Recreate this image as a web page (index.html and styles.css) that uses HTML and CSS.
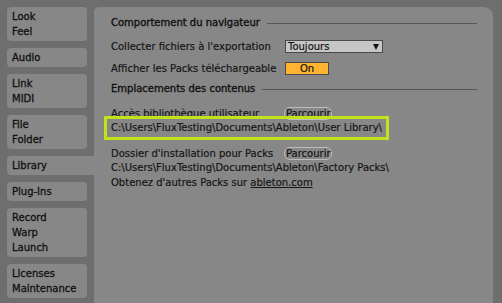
FILE: index.html
```html
<!DOCTYPE html>
<html lang="fr">
<head>
    <meta charset="UTF-8">
    <meta name="viewport" content="width=device-width, initial-scale=1.0">
    <title>Préférences - Library</title>
    <link rel="stylesheet" href="styles.css">
</head>
<body>
    <div class="prefs">
        <nav class="tabs">
            <div class="tab">Look<br>Feel</div>
            <div class="tab">Audio</div>
            <div class="tab">Link<br>MIDI</div>
            <div class="tab">File<br>Folder</div>
            <div class="tab active">Library</div>
            <div class="tab">Plug-Ins</div>
            <div class="tab">Record<br>Warp<br>Launch</div>
            <div class="tab">Licenses<br>Maintenance</div>
        </nav>

        <main class="panel">
            <div class="section-title">Comportement du navigateur</div>

            <div class="row row-first">
                <span class="label">Collecter fichiers à l'exportation</span>
                <div class="select">
                    <span>Toujours</span>
                    <span class="arrow"></span>
                </div>
            </div>

            <div class="row row-toggle">
                <span class="label">Afficher les Packs téléchargeable</span>
                <div class="toggle">On</div>
            </div>

            <div class="section-title section-second">Emplacements des contenus</div>

            <div class="row row-user">
                <span class="label">Accès bibliothèque utilisateur</span>
                <div class="browse">Parcourir</div>
            </div>
            <div class="path highlight">C:\Users\FluxTesting\Documents\Ableton\User Library\</div>

            <div class="row row-packs">
                <span class="label">Dossier d'installation pour Packs</span>
                <div class="browse">Parcourir</div>
            </div>
            <div class="path">C:\Users\FluxTesting\Documents\Ableton\Factory Packs\</div>
            <div class="path">Obtenez d'autres Packs sur <a class="link" href="#">ableton.com</a></div>
        </main>
    </div>
</body>
</html>
```

FILE: styles.css
```css
body {
    margin: 0;
    padding: 0;
    background-color: #6e6e6e;
    font-family: "DejaVu Sans", sans-serif;
    font-size: 10px;
    color: #161616;
    -webkit-text-stroke: 0.2px #161616;
    overflow: hidden;
}

.prefs {
    display: flex;
    padding: 7px 0 0 7px;
    gap: 7px;
    height: 296px;
}

.tabs {
    width: 80px;
    display: flex;
    flex-direction: column;
    gap: 7px;
}

.tab {
    background: #878787;
    border-radius: 4px;
    padding: 2px 5px;
    line-height: 15px;
    color: #111;
    -webkit-text-stroke: 0.3px #111;
}

.tab.active {
    margin-right: -7px;
    border-radius: 4px 0 0 4px;
}

.panel {
    width: 399px;
    background: #878787;
    border-radius: 5px 9px 0 0;
    padding: 9px 16px 0 17px;
    box-sizing: border-box;
}

.section-title {
    display: flex;
    align-items: center;
    height: 14px;
    line-height: 14px;
    color: #111;
    -webkit-text-stroke: 0.35px #111;
}

.section-title::after {
    content: "";
    flex: 1;
    height: 1px;
    margin-left: 7px;
    background: #555;
}

.section-second {
    margin-top: 7px;
}

.row {
    display: flex;
    align-items: center;
    height: 14px;
}

.label {
    width: 174px;
    white-space: nowrap;
}

.row-first {
    margin-top: 9px;
}

.row-toggle {
    margin-top: 8px;
}

.row-user {
    margin-top: 10px;
}

.row-packs {
    margin-top: 6px;
}

.select {
    width: 98px;
    height: 13px;
    box-sizing: border-box;
    background: #c6c6c6;
    border: 1px solid #4a4a4a;
    display: flex;
    align-items: center;
    justify-content: space-between;
    padding: 0 3px 0 2px;
    line-height: 11px;
    color: #111;
}

.arrow {
    width: 0;
    height: 0;
    border-left: 3.5px solid transparent;
    border-right: 3.5px solid transparent;
    border-top: 6px solid #111;
    margin-top: 1px;
}

.toggle {
    width: 44px;
    height: 13px;
    box-sizing: border-box;
    background: #ffb330;
    border: 1px solid #4a4a4a;
    text-align: center;
    line-height: 11px;
    color: #111;
}

.browse {
    width: 48px;
    height: 13px;
    box-sizing: border-box;
    margin-left: -1px;
    border: 1px solid #bdbdbd;
    border-radius: 6px;
    padding-left: 1px;
    line-height: 11px;
    white-space: nowrap;
    color: #111;
}

.path {
    line-height: 15px;
    white-space: nowrap;
}

.highlight {
    display: inline-block;
    margin: -4px 0 0 -7px;
    padding: 1px 4px 0 4px;
    height: 17px;
    line-height: 16px;
    border: 3px solid #c2e31c;
    position: relative;
}

.link {
    color: #161616;
    text-decoration: underline;
}
```
